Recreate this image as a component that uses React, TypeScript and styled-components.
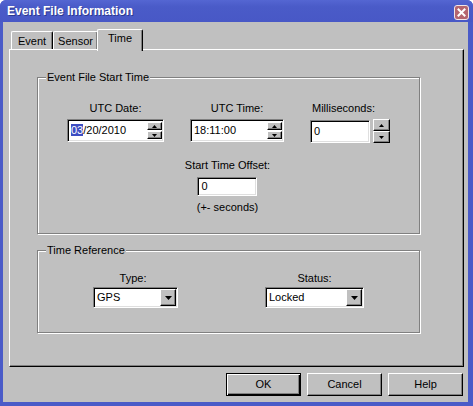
import * as React from 'react';
import styled, { createGlobalStyle } from 'styled-components';

const GlobalStyle = createGlobalStyle`
  html, body {
    margin: 0;
    padding: 0;
    background: #ffffff;
  }
  body {
    font-family: "Liberation Sans", Arial, sans-serif;
    font-size: 11px;
    color: #000;
  }
`;

const Window = styled.div`
  width: 473px;
  height: 406px;
  box-sizing: border-box;
  display: flex;
  flex-direction: column;
  background: #4a5bc8;
  border-radius: 6px 6px 0 0;
  overflow: hidden;
`;

const TitleBar = styled.div`
  height: 22px;
  flex: none;
  display: flex;
  align-items: center;
  justify-content: space-between;
  padding: 0 4px 0 7px;
  background: linear-gradient(#5466d2 0%, #4a5bc8 30%, #4858c6 100%);
  color: #fff;
  font-family: "Liberation Sans", Arial, sans-serif;
  font-weight: bold;
  font-size: 12px;
  text-shadow: 1px 1px 0 #2c3a8e;
`;

const CloseButton = styled.div`
  width: 15px;
  height: 15px;
  margin-top: 2px;
  box-sizing: border-box;
  border: 1px solid #f2e6e8;
  border-radius: 3px;
  background: #b4656f;
  display: flex;
  align-items: center;
  justify-content: center;
`;

const Body = styled.div`
  flex: 1;
  margin: 0 5px 4px 3px;
  background: #c0c0c0;
  padding: 7px 4px 6px 6px;
  display: flex;
  flex-direction: column;
`;

const TabStrip = styled.div`
  display: flex;
  align-items: flex-end;
  height: 20px;
  padding-left: 2px;
  position: relative;
  z-index: 1;
`;

const Tab = styled.div<{ $active?: boolean; $w: number }>`
  box-sizing: border-box;
  width: ${(p) => p.$w}px;
  height: ${(p) => (p.$active ? 22 : 18)}px;
  margin-bottom: ${(p) => (p.$active ? -2 : 0)}px;
  margin-left: ${(p) => (p.$active ? -1 : 0)}px;
  background: #c0c0c0;
  border-top: 1px solid #fff;
  border-left: 1px solid #fff;
  border-right: 1px solid #000;
  border-radius: 2px 2px 0 0;
  box-shadow: inset -1px 0 0 #808080;
  display: flex;
  justify-content: center;
  padding-top: ${(p) => (p.$active ? 2 : 3)}px;
  line-height: 13px;
`;

const Panel = styled.div`
  height: 318px;
  box-sizing: border-box;
  border-top: 1px solid #fff;
  border-left: 1px solid #fff;
  border-right: 1px solid #000;
  border-bottom: 1px solid #000;
  box-shadow: inset -1px -1px 0 #808080;
  padding: 27px 0 0 27px;
  display: flex;
  flex-direction: column;
  gap: 16px;
`;

const GroupBox = styled.div<{ $h: number }>`
  position: relative;
  width: 383px;
  height: ${(p) => p.$h}px;
  box-sizing: border-box;
  border: 1px solid #808080;
  box-shadow: inset 1px 1px 0 #fff, 1px 1px 0 #fff;
  display: flex;
  flex-direction: column;
`;

const Legend = styled.span`
  position: absolute;
  top: -7px;
  left: 8px;
  padding: 0 1px;
  background: #c0c0c0;
  line-height: 13px;
`;

const FieldRow = styled.div<{ $pl: number; $gap: number; $pt: number }>`
  display: flex;
  padding: ${(p) => p.$pt}px 0 0 ${(p) => p.$pl}px;
  gap: ${(p) => p.$gap}px;
`;

const Column = styled.div<{ $gap?: number }>`
  display: flex;
  flex-direction: column;
  align-items: center;
  gap: ${(p) => p.$gap ?? 5}px;
`;

const Label = styled.div<{ $shift?: number }>`
  line-height: 13px;
  white-space: nowrap;
  margin-right: ${(p) => p.$shift ?? 0}px;
`;

const Sunken = styled.div<{ $w: number; $h: number }>`
  width: ${(p) => p.$w}px;
  height: ${(p) => p.$h}px;
  box-sizing: border-box;
  background: #fff;
  border-top: 1px solid #808080;
  border-left: 1px solid #808080;
  border-right: 1px solid #fff;
  border-bottom: 1px solid #fff;
  box-shadow: inset 1px 1px 0 #000, inset -1px -1px 0 #dfdfdf;
  display: flex;
  align-items: center;
  padding: 0 1px 0 3px;
  line-height: 13px;
`;

const FieldText = styled.span`
  flex: 1;
  white-space: nowrap;
`;

const Highlight = styled.span`
  background: #3d4dc2;
  color: #fff;
`;

const SpinCol = styled.div<{ $gap: number }>`
  display: flex;
  flex-direction: column;
  gap: ${(p) => p.$gap}px;
`;

const SpinButton = styled.div<{ $w: number; $h: number }>`
  width: ${(p) => p.$w}px;
  height: ${(p) => p.$h}px;
  box-sizing: border-box;
  background: #c0c0c0;
  border-top: 1px solid #fff;
  border-left: 1px solid #fff;
  border-right: 1px solid #000;
  border-bottom: 1px solid #000;
  box-shadow: inset -1px -1px 0 #808080;
  display: flex;
  align-items: center;
  justify-content: center;
`;

const MsWrap = styled.div`
  display: flex;
  align-items: center;
  gap: 3px;
`;

const OffsetBlock = styled.div`
  display: flex;
  justify-content: center;
  padding-top: 16px;
  padding-right: 2px;
`;

const DropButton = styled(SpinButton)`
  margin-left: auto;
`;

const ButtonRow = styled.div`
  display: flex;
  justify-content: flex-end;
  gap: 6px;
  margin-top: 6px;
  padding-right: 1px;
`;

const DialogButton = styled.div<{ $default?: boolean }>`
  width: 75px;
  height: 23px;
  box-sizing: border-box;
  background: #c0c0c0;
  display: flex;
  align-items: center;
  justify-content: center;
  line-height: 13px;
  ${(p) =>
    p.$default
      ? `border: 1px solid #000;
         box-shadow: inset 1px 1px 0 #fff, inset -1px -1px 0 #000, inset -2px -2px 0 #808080;`
      : `border-top: 1px solid #fff;
         border-left: 1px solid #fff;
         border-right: 1px solid #000;
         border-bottom: 1px solid #000;
         box-shadow: inset -1px -1px 0 #808080;`}
`;

const Arrow = ({ up, size = 'small' }: { up?: boolean; size?: 'small' | 'drop' }) => {
  if (size === 'drop') {
    return (
      <svg width="7" height="4" viewBox="0 0 7 4">
        <polygon points="0,0 7,0 3.5,4" fill="#000" />
      </svg>
    );
  }
  return (
    <svg width="5" height="3" viewBox="0 0 5 3">
      {up ? <polygon points="2.5,0 5,3 0,3" fill="#000" /> : <polygon points="0,0 5,0 2.5,3" fill="#000" />}
    </svg>
  );
};

const InnerSpinner = () => (
  <SpinCol $gap={1}>
    <SpinButton $w={15} $h={8}>
      <Arrow up />
    </SpinButton>
    <SpinButton $w={15} $h={8}>
      <Arrow />
    </SpinButton>
  </SpinCol>
);

const Dropdown = ({ value, width }: { value: string; width: number }) => (
  <Sunken $w={width} $h={21}>
    <FieldText>{value}</FieldText>
    <DropButton $w={16} $h={17}>
      <Arrow size="drop" />
    </DropButton>
  </Sunken>
);

export default function App() {
  return (
    <>
      <GlobalStyle />
      <Window>
        <TitleBar>
          <span>Event File Information</span>
          <CloseButton>
            <svg width="9" height="9" viewBox="0 0 9 9">
              <path d="M1.5 1.5 L7.5 7.5 M7.5 1.5 L1.5 7.5" stroke="#fff" strokeWidth="2" strokeLinecap="square" />
            </svg>
          </CloseButton>
        </TitleBar>
        <Body>
          <TabStrip>
            <Tab $w={42}>Event</Tab>
            <Tab $w={45}>Sensor</Tab>
            <Tab $w={46} $active>
              Time
            </Tab>
          </TabStrip>
          <Panel>
            <GroupBox $h={157}>
              <Legend>Event File Start Time</Legend>
              <FieldRow $pl={29} $gap={26} $pt={24}>
                <Column $gap={4}>
                  <Label>UTC Date:</Label>
                  <Sunken $w={97} $h={23}>
                    <FieldText>
                      <Highlight>03</Highlight>/20/2010
                    </FieldText>
                    <InnerSpinner />
                  </Sunken>
                </Column>
                <Column $gap={4}>
                  <Label>UTC Time:</Label>
                  <Sunken $w={94} $h={23}>
                    <FieldText>18:11:00</FieldText>
                    <InnerSpinner />
                  </Sunken>
                </Column>
                <Column $gap={4}>
                  <Label $shift={13}>Milliseconds:</Label>
                  <MsWrap>
                    <Sunken $w={60} $h={23}>
                      <FieldText>0</FieldText>
                    </Sunken>
                    <SpinCol $gap={0}>
                      <SpinButton $w={17} $h={12}>
                        <Arrow up />
                      </SpinButton>
                      <SpinButton $w={17} $h={12}>
                        <Arrow />
                      </SpinButton>
                    </SpinCol>
                  </MsWrap>
                </Column>
              </FieldRow>
              <OffsetBlock>
                <Column>
                  <Label>Start Time Offset:</Label>
                  <Sunken $w={60} $h={19}>
                    <FieldText>0</FieldText>
                  </Sunken>
                  <Label>(+- seconds)</Label>
                </Column>
              </OffsetBlock>
            </GroupBox>
            <GroupBox $h={83}>
              <Legend>Time Reference</Legend>
              <FieldRow $pl={55} $gap={87} $pt={21}>
                <Column $gap={2}>
                  <Label $shift={5}>Type:</Label>
                  <Dropdown value="GPS" width={85} />
                </Column>
                <Column $gap={2}>
                  <Label>Status:</Label>
                  <Dropdown value="Locked" width={99} />
                </Column>
              </FieldRow>
            </GroupBox>
          </Panel>
          <ButtonRow>
            <DialogButton $default>OK</DialogButton>
            <DialogButton>Cancel</DialogButton>
            <DialogButton>Help</DialogButton>
          </ButtonRow>
        </Body>
      </Window>
    </>
  );
}
